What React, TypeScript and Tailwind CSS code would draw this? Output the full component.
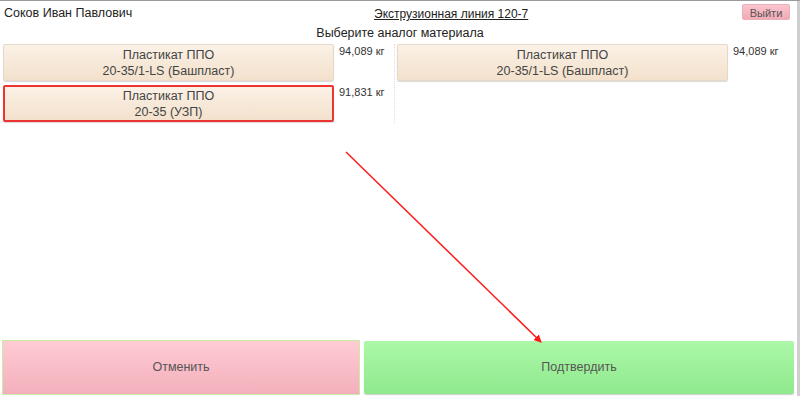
import React from "react";

const font = { fontFamily: '"Liberation Sans", Arial, sans-serif' };

function Material({ line1, line2, weight, selected }: { line1: string; line2: string; weight: string; selected?: boolean }) {
  return (
    <div className="flex items-start">
      <button
        className={
          "w-[331px] h-[37px] flex flex-col items-center justify-center text-[12.5px] leading-[16px] text-[#444] rounded-[2px] bg-gradient-to-b from-[#fbf1e6] to-[#f3e1cc] shadow-[0_1px_1px_rgba(0,0,0,0.15)] " +
          (selected ? "border-2 border-[#ee3333]" : "border border-[#e6d8c8]")
        }
      >
        <span>{line1}</span>
        <span>{line2}</span>
      </button>
      <span className="ml-[5px] mt-[-1px] text-[11px] text-[#333]">{weight}</span>
    </div>
  );
}

export default function App() {
  return (
    <div className="relative w-[800px] h-[396px] bg-white border-t border-[#9a9a9a] overflow-hidden flex flex-col" style={font}>
      {/* header */}
      <div className="relative h-[22px] flex items-center px-[4px] text-[12.5px] text-[#222]">
        <span className="mt-[2px]">Соков Иван Павлович</span>
        <span className="absolute left-[374px] top-[4px] text-[12px] underline">Экструзионная линия 120-7</span>
        <button className="ml-auto mr-[6px] w-[48px] h-[16px] text-[11px] text-[#555] rounded-[2px] bg-gradient-to-b from-[#fbc5cd] to-[#f2aab6] border border-[#e9b0b8]">
          Выйти
        </button>
      </div>
      <div className="text-center text-[12.5px] text-[#222] leading-[20px]">Выберите аналог материала</div>

      {/* materials */}
      <div className="flex mt-[1px] pr-[4px]">
        <div className="w-[394px] pl-[3px] flex flex-col gap-[4px]">
          <Material line1="Пластикат ППО" line2="20-35/1-LS (Башпласт)" weight="94,089 кг" />
          <Material line1="Пластикат ППО" line2="20-35 (УЗП)" weight="91,831 кг" selected />
        </div>
        <div className="border-l border-dotted border-[#dddddd] h-[80px]" />
        <div className="pl-[2px]">
          <Material line1="Пластикат ППО" line2="20-35/1-LS (Башпласт)" weight="94,089 кг" />
        </div>
      </div>

      <div className="flex-1" />

      {/* footer */}
      <div className="flex items-center gap-[4px] pl-[2px] pr-[6px] pb-[1px] h-[56px]">
        <button className="w-[358px] h-[55px] text-[12.5px] text-[#555] bg-gradient-to-b from-[#ffcbd3] to-[#f3b0bc] border border-[#c8eca8]">
          Отменить
        </button>
        <button className="flex-1 h-[53px] text-[12.5px] text-[#555] rounded-[2px] bg-gradient-to-b from-[#acf8a8] to-[#8fe98d] shadow-[0_1px_1px_rgba(0,0,0,0.2)]">
          Подтвердить
        </button>
      </div>

      {/* right edge bar */}
      <div className="absolute right-0 top-0 w-[3px] h-full bg-[#cfcfcf]" />

      {/* annotation arrow */}
      <svg className="absolute left-0 top-0 pointer-events-none" width="800" height="396">
        <defs>
          <marker id="ah" markerWidth="8" markerHeight="8" refX="7" refY="4" orient="auto" markerUnits="userSpaceOnUse">
            <path d="M0,0 L8,4 L0,8 z" fill="#ff1a1a" />
          </marker>
        </defs>
        <line x1="346" y1="151" x2="541" y2="341" stroke="#ff1a1a" strokeWidth="1.5" markerEnd="url(#ah)" />
      </svg>
    </div>
  );
}
